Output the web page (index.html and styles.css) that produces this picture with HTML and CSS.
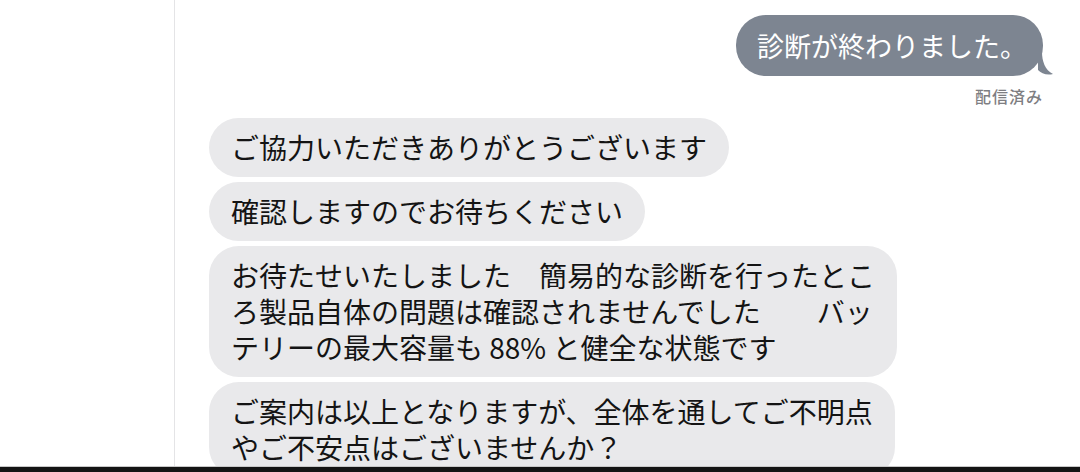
FILE: index.html
```html
<!DOCTYPE html>
<html lang="ja">
<head>
<meta charset="utf-8">
<link rel="stylesheet" href="styles.css">
</head>
<body>
<div class="screen">
  <div class="main">
    <aside class="sidebar"></aside>
    <section class="chat">
      <div class="sent-row">
        <div class="bubble sent">診断が終わりました。<svg class="tail" width="16" height="24" viewBox="0 0 16 24"><path d="M0 0 L4 0 C4 9 7 18 15 22 C9 23.5 3 21.5 0 18 Z" fill="#7d8591"/></svg></div>
      </div>
      <div class="status">配信済み</div>
      <div class="received">
        <div class="bubble in">ご協力いただきありがとうございます</div>
        <div class="bubble in">確認しますのでお待ちください</div>
        <div class="bubble in">お待たせいたしました　簡易的な診断を行ったとこ<br>ろ製品自体の問題は確認されませんでした　　バッ<br>テリーの最大容量も 88% と健全な状態です</div>
        <div class="bubble in">ご案内は以上となりますが、全体を通してご不明点<br>やご不安点はございませんか？</div>
      </div>
    </section>
  </div>
  <div class="bottom-bar"></div>
</div>
</body>
</html>
```
FILE: styles.css
```css
html, body {
  margin: 0;
  padding: 0;
  background: #ffffff;
}
body {
  font-family: "Noto Sans CJK JP", "Noto Sans", sans-serif;
  color: #141414;
}
.screen {
  width: 1080px;
  height: 472px;
  display: flex;
  flex-direction: column;
  overflow: hidden;
}
.main {
  flex: 1;
  display: flex;
  overflow: hidden;
  min-height: 0;
}
.sidebar {
  width: 174px;
  flex: none;
  border-right: 1px solid #e4e4e6;
}
.chat {
  flex: 1;
  display: flex;
  flex-direction: column;
  padding-top: 15px;
}
.sent-row {
  display: flex;
  justify-content: flex-end;
  padding-right: 37px;
}
.bubble {
  border-radius: 30px;
  font-size: 28px;
  line-height: 36px;
  padding: 11px 22px 12px;
  white-space: nowrap;
}
.sent {
  position: relative;
  background: #7d8591;
  color: #ffffff;
  font-size: 27px;
  line-height: 37px;
  padding: 12px 16px 12px 21px;
}
.tail {
  position: absolute;
  right: -11px;
  bottom: 0;
  display: block;
}
.status {
  align-self: flex-end;
  margin-right: 37px;
  margin-top: 10px;
  font-size: 16px;
  line-height: 20px;
  font-weight: 500;
  color: #7e7e82;
  letter-spacing: 1px;
}
.received {
  display: flex;
  flex-direction: column;
  align-items: flex-start;
  gap: 5px;
  margin-top: 12px;
  padding-left: 34px;
}
.in {
  background: #e9e9eb;
}
.bottom-bar {
  flex: none;
  height: 5px;
  background: #141414;
  border-top: 1px solid #c8c8c8;
}
```
